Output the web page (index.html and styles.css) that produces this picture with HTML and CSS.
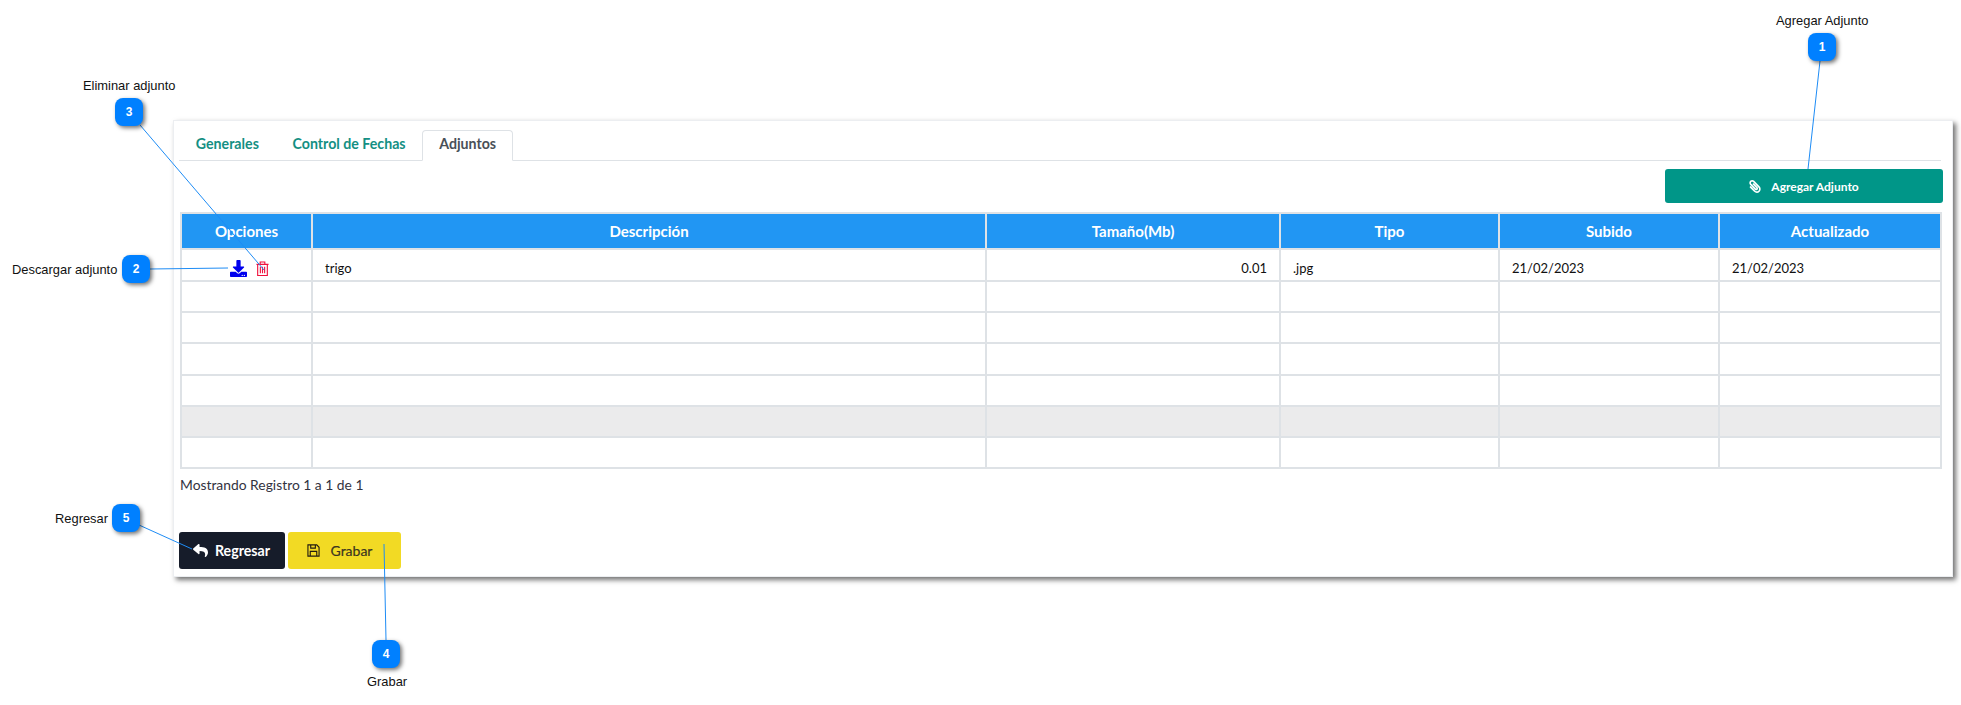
FILE: index.html
```html
<!DOCTYPE html>
<html lang="en">
<head>
    <meta charset="UTF-8">
    <title>Adjuntos</title>
    <link rel="stylesheet" href="styles.css">
</head>
<body>
    <div class="card">
        <div class="tabs">
            <a class="tab">Generales</a>
            <a class="tab">Control de Fechas</a>
            <a class="tab active">Adjuntos</a>
        </div>

        <div class="toolbar">
            <button class="btn btn-add">
                <svg class="icon-clip" viewBox="0 0 448 512"><path d="M43.246 466.142c-58.43-60.289-57.341-157.511 1.386-217.581L254.392 34c44.316-45.332 116.351-45.336 160.671 0 43.89 44.894 43.943 117.329 0 162.276L232.214 383.128c-29.855 30.537-78.633 30.111-107.982-.998-28.275-29.97-27.368-77.473 1.452-106.953l143.743-146.835c6.182-6.314 16.312-6.422 22.626-.241l22.861 22.379c6.315 6.182 6.422 16.312.241 22.626L171.427 319.927c-4.932 5.045-5.236 13.428-.648 18.292 4.372 4.634 11.245 4.711 15.688.165l182.849-186.851c19.613-20.062 19.613-52.725-.011-72.798-19.189-19.627-49.957-19.637-69.154 0L90.39 293.295c-34.763 35.56-35.299 93.12-1.191 128.313 34.01 35.093 88.985 35.137 123.058.286l172.06-175.999c6.177-6.319 16.307-6.433 22.626-.256l22.877 22.364c6.319 6.177 6.434 16.307.256 22.626l-172.06 175.998c-59.576 60.938-155.943 60.216-214.77-.485z"/></svg>
                Agregar Adjunto
            </button>
        </div>

        <table class="grid">
            <colgroup>
                <col class="col-opt"><col class="col-desc"><col class="col-size"><col class="col-type"><col class="col-date"><col class="col-date2">
            </colgroup>
            <thead>
                <tr><th>Opciones</th><th>Descripción</th><th>Tamaño(Mb)</th><th>Tipo</th><th>Subido</th><th>Actualizado</th></tr>
            </thead>
            <tbody>
                <tr>
                    <td class="options">
                        <svg class="icon-download" viewBox="0 0 512 512"><path d="M216 0h80c13.3 0 24 10.7 24 24v168h87.7c17.8 0 26.7 21.5 14.1 34.1L269.7 378.3c-7.5 7.5-19.8 7.5-27.3 0L90.1 226.1c-12.6-12.6-3.7-34.1 14.1-34.1H192V24c0-13.3 10.7-24 24-24zm296 376v112c0 13.3-10.7 24-24 24H24c-13.3 0-24-10.7-24-24V376c0-13.3 10.7-24 24-24h146.7l49 49c20.1 20.1 52.5 20.1 72.6 0l49-49H488c13.3 0 24 10.7 24 24zm-124 88c0-11-9-20-20-20s-20 9-20 20 9 20 20 20 20-9 20-20zm64 0c0-11-9-20-20-20s-20 9-20 20 9 20 20 20 20-9 20-20z"/></svg>
                        <svg class="icon-trash" viewBox="0 0 14 16"><path d="M.5 3.5h13M4.5 3.5V1h5v2.5M1.8 3.5v12h10.4v-12M4.7 6v7M7 6v7M9.3 6v7"/></svg>
                    </td>
                    <td>trigo</td>
                    <td class="num">0.01</td>
                    <td>.jpg</td>
                    <td>21/02/2023</td>
                    <td>21/02/2023</td>
                </tr>
                <tr><td></td><td></td><td></td><td></td><td></td><td></td></tr>
                <tr><td></td><td></td><td></td><td></td><td></td><td></td></tr>
                <tr><td></td><td></td><td></td><td></td><td></td><td></td></tr>
                <tr><td></td><td></td><td></td><td></td><td></td><td></td></tr>
                <tr class="shaded"><td></td><td></td><td></td><td></td><td></td><td></td></tr>
                <tr><td></td><td></td><td></td><td></td><td></td><td></td></tr>
            </tbody>
        </table>

        <p class="summary">Mostrando Registro 1 a 1 de 1</p>

        <div class="actions">
            <button class="btn btn-back">
                <svg class="icon-reply" viewBox="0 0 512 512"><path d="M8.309 189.836L184.313 37.851C199.719 24.546 224 35.347 224 56.015v80.053c160.629 1.839 288 34.032 288 186.258 0 61.441-39.581 122.309-83.333 154.132-13.653 9.931-33.111-2.533-28.077-18.631 45.344-145.012-21.507-183.51-176.59-185.742V360c0 20.7-24.3 31.453-39.687 18.164l-176.004-152c-11.071-9.562-11.086-26.753 0-36.328z"/></svg>
                Regresar
            </button>
            <button class="btn btn-save">
                <svg class="icon-save" viewBox="0 0 14 14"><path d="M1 1h9.5L13 3.5V13H1zM4 1v3.5h5V1M3.5 13V8h7v5"/></svg>
                Grabar
            </button>
        </div>
    </div>

    <!-- Callouts -->
    <svg class="leaders" width="1961" height="705">
        <line x1="1820" y1="61" x2="1808" y2="169"/>
        <line x1="150" y1="269" x2="228" y2="268"/>
        <line x1="140" y1="125" x2="264" y2="270"/>
        <line x1="384" y1="544" x2="386" y2="640"/>
        <line x1="139" y1="525" x2="192" y2="549"/>
    </svg>

    <div class="badge b1">1</div>
    <div class="badge b2">2</div>
    <div class="badge b3">3</div>
    <div class="badge b4">4</div>
    <div class="badge b5">5</div>

    <span class="note n1">Agregar Adjunto</span>
    <span class="note n2">Descargar adjunto</span>
    <span class="note n3">Eliminar adjunto</span>
    <span class="note n4">Grabar</span>
    <span class="note n5">Regresar</span>
</body>
</html>
```

FILE: styles.css
```css
body {
    margin: 0;
    width: 1961px;
    height: 705px;
    position: relative;
    overflow: hidden;
    background: #fff;
    font-family: 'Lato', sans-serif;
    color: #212529;
}
.card {
    box-sizing: border-box;
    width: 1780px;
    height: 457px;
    margin-left: 173px;
    position: absolute;
    top: 120px;
    padding: 9px 11px 0 5px;
    background: #fff;
    border: 1px solid #eceef1;
    box-shadow: 3px 3px 5px rgba(0, 0, 0, 0.55);
}
.tabs {
    display: flex;
    height: 30px;
    border-bottom: 1px solid #dee2e6;
}
.tab {
    box-sizing: border-box;
    height: 31px;
    padding: 4px 15.8px 0;
    border: 1px solid transparent;
    font-size: 14.2px;
    font-weight: 700;
    line-height: 17px;
    color: #148f83;
}
.tab.active {
    color: #495057;
    background: #fff;
    border-color: #dee2e6 #dee2e6 #fff;
    border-radius: 4px 4px 0 0;
}
.toolbar {
    display: flex;
    justify-content: flex-end;
    margin: 8px -2px 9px 0;
}
.btn {
    display: flex;
    align-items: center;
    justify-content: center;
    border: none;
    border-radius: 3px;
    font-family: 'Lato', sans-serif;
    font-weight: 700;
    padding: 0;
}
.btn-add {
    width: 278px;
    height: 34px;
    background: #009688;
    color: #fff;
    font-size: 12px;
}
.icon-clip {
    width: 12px;
    height: 13px;
    margin-right: 10px;
    fill: #fff;
    transform: scaleX(-1);
}
.grid {
    width: 1760px;
    margin-left: 1px;
    border-collapse: collapse;
    table-layout: fixed;
    font-size: 13px;
}
.col-opt { width: 131px; }
.col-desc { width: 674px; }
.col-size { width: 294px; }
.col-type { width: 219px; }
.col-date { width: 220px; }
.col-date2 { width: 222px; }
.grid th {
    height: 34px;
    padding: 0;
    background: #2196f3;
    border: 2px solid #dee2e6;
    color: #fff;
    font-size: 15px;
    font-weight: 700;
}
.grid td {
    height: 24.1px;
    padding: 5px 12px 0;
    border: 2px solid #dee2e6;
    color: #111;
    vertical-align: middle;
}
.grid td.num {
    text-align: right;
}
.grid td.options {
    padding: 5px 0 0 6px;
    height: 25.3px;
    text-align: center;
}
.grid tr.shaded td {
    background: #ebebec;
}
.options svg {
    vertical-align: middle;
}
.icon-download {
    width: 17px;
    height: 17px;
    fill: #0000ee;
    margin-right: 5px;
}
.icon-trash {
    width: 13px;
    height: 15px;
    fill: none;
    stroke: #f0103c;
    stroke-width: 1.2;
}
.summary {
    margin: 7px 0 0 1px;
    font-size: 13.85px;
    line-height: 17px;
    color: #33333f;
}
.actions {
    display: flex;
    gap: 3px;
    margin-top: 39px;
}
.btn-back {
    width: 106px;
    height: 37px;
    background: #161c2a;
    color: #fff;
    font-size: 14.2px;
    padding-right: 1px;
}
.icon-reply {
    width: 15px;
    height: 15px;
    margin-right: 7px;
    fill: #fff;
}
.btn-save {
    width: 113px;
    height: 37px;
    padding-right: 10px;
    background: #f2da24;
    color: #3a3520;
    font-size: 14px;
    font-weight: 400;
    -webkit-text-stroke: 0.2px #3a3520;
}
.icon-save {
    width: 13px;
    height: 13px;
    margin-right: 11px;
    fill: none;
    stroke: #221c10;
    stroke-width: 1.2;
}

/* callouts sit on top of the screen */
.leaders {
    position: absolute;
    top: 0;
    left: 0;
}
.leaders line {
    stroke: #1e8cf5;
    stroke-width: 1;
}
.badge {
    position: absolute;
    width: 28px;
    height: 28px;
    border-radius: 8px;
    background: #0080ff;
    box-shadow: 2px 2px 4px rgba(0, 0, 0, 0.55);
    color: #fff;
    font-family: 'Liberation Sans', sans-serif;
    font-size: 12px;
    font-weight: 700;
    line-height: 28px;
    text-align: center;
}
.b1 { left: 1808px; top: 33px; }
.b2 { left: 122px; top: 255px; }
.b3 { left: 115px; top: 98px; }
.b4 { left: 372px; top: 640px; }
.b5 { left: 112px; top: 504px; }
.note {
    position: absolute;
    font-family: 'Liberation Sans', sans-serif;
    font-size: 12.9px;
    line-height: 15px;
    color: #111;
    white-space: nowrap;
}
.n1 { left: 1776px; top: 13px; }
.n2 { left: 12px; top: 262px; }
.n3 { left: 83px; top: 78px; }
.n4 { left: 367px; top: 674px; }
.n5 { left: 55px; top: 511px; }
```
